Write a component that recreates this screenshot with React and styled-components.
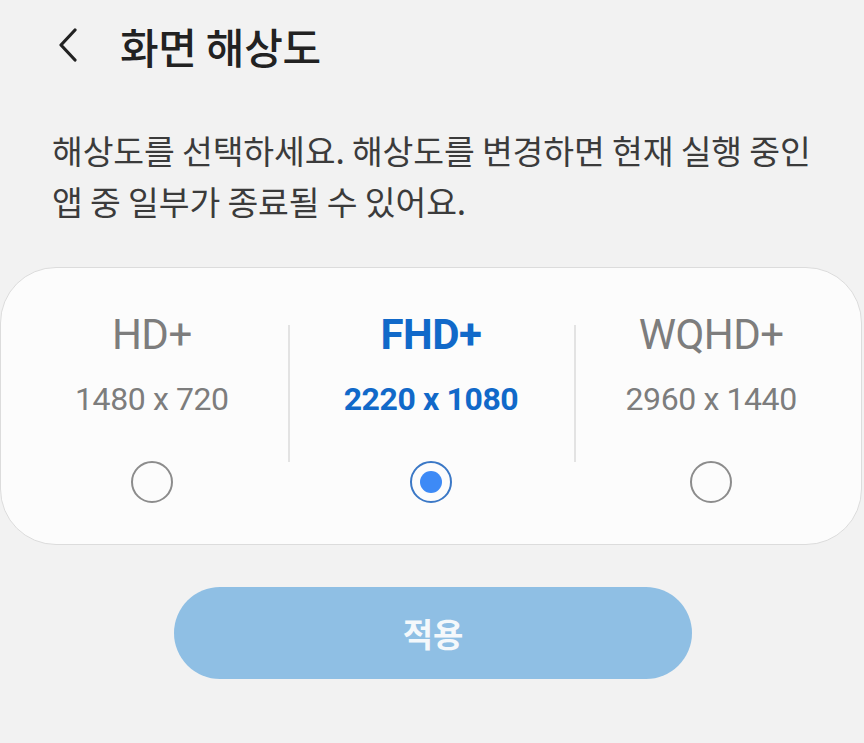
import React from "react";
import styled, { createGlobalStyle } from "styled-components";

const Global = createGlobalStyle`
  html, body { margin: 0; padding: 0; background: #f2f2f2; }
  body { font-family: Roboto, "Noto Sans CJK KR", sans-serif; }
`;

const Page = styled.div`
  width: 864px;
  height: 743px;
  background: #f2f2f2;
  display: flex;
  flex-direction: column;
  overflow: hidden;
`;

const Header = styled.header`
  display: flex;
  align-items: center;
  height: 90px;
  padding-left: 55px;
  gap: 40px;
`;

const BackButton = styled.button`
  border: none;
  background: none;
  padding: 0;
  width: 25px;
  height: 34px;
  display: flex;
  align-items: center;
  justify-content: center;
  color: #222;
`;

const Title = styled.h1`
  margin: 0;
  font-family: "Noto Sans CJK KR", sans-serif;
  font-weight: 500;
  font-size: 42px;
  color: #222;
  letter-spacing: -0.3px;
`;

const Description = styled.p`
  margin: 34px 0 0;
  padding: 0 20px 0 52px;
  font-family: "Noto Sans CJK KR", sans-serif;
  font-size: 33.5px;
  line-height: 51px;
  color: #3b3b3b;
  letter-spacing: -0.15px;
  white-space: nowrap;
`;

const Card = styled.div`
  margin: 41px 2px 0 0;
  height: 278px;
  background: #fcfcfc;
  border: 1px solid #dcdcdc;
  border-radius: 56px;
  display: grid;
  grid-template-columns: repeat(3, 1fr);
  box-sizing: border-box;
`;

const Option = styled.div`
  position: relative;
  display: flex;
  flex-direction: column;
  align-items: center;
  padding-top: 42px;
  padding-left: ${(p) => (p.$edge === "start" ? "15px" : "0")};
  padding-right: ${(p) => (p.$edge === "end" ? "13px" : "0")};
  &::before {
    content: "";
    display: ${(p) => (p.$divider ? "block" : "none")};
    position: absolute;
    left: 0;
    top: 57px;
    bottom: 82px;
    width: 2px;
    background: #e3e3e3;
  }
`;

const Label = styled.div`
  font-family: Roboto, sans-serif;
  font-size: 42px;
  line-height: 50px;
  font-weight: ${(p) => (p.$active ? 700 : 400)};
  color: ${(p) => (p.$active ? "#1169c9" : "#7d7d7d")};
  letter-spacing: -0.5px;
`;

const Resolution = styled.div`
  margin-top: 19px;
  font-family: Roboto, sans-serif;
  font-size: 32px;
  line-height: 40px;
  font-weight: ${(p) => (p.$active ? 700 : 400)};
  color: ${(p) => (p.$active ? "#1169c9" : "#7d7d7d")};
  letter-spacing: -0.4px;
`;

const Radio = styled.div`
  margin-top: 42px;
  width: 42px;
  height: 42px;
  box-sizing: border-box;
  border-radius: 50%;
  border: 2px solid ${(p) => (p.$active ? "#3b78c6" : "#8c8c8c")};
  display: flex;
  align-items: center;
  justify-content: center;
  &::after {
    content: "";
    display: ${(p) => (p.$active ? "block" : "none")};
    width: 22px;
    height: 22px;
    border-radius: 50%;
    background: #3d8af6;
  }
`;

const ApplyButton = styled.button`
  align-self: center;
  margin: 42px 0 0 2px;
  width: 518px;
  height: 92px;
  border: none;
  border-radius: 46px;
  background: #8fbfe4;
  color: #f4f8fb;
  font-family: "Noto Sans CJK KR", sans-serif;
  font-weight: 700;
  font-size: 33px;
`;

const options = [
  { name: "HD+", res: "1480 x 720", edge: "start" },
  { name: "FHD+", res: "2220 x 1080", active: true },
  { name: "WQHD+", res: "2960 x 1440", edge: "end" },
];

export default function App() {
  return (
    <Page>
      <Global />
      <Header>
        <BackButton aria-label="back">
          <svg width="22" height="34" viewBox="0 0 22 34" fill="none">
            <path d="M18 2 L4 17 L18 32" stroke="#222" strokeWidth="3.2" strokeLinecap="round" strokeLinejoin="round" />
          </svg>
        </BackButton>
        <Title>화면 해상도</Title>
      </Header>
      <Description>
        해상도를 선택하세요. 해상도를 변경하면 현재 실행 중인
        <br />앱 중 일부가 종료될 수 있어요.
      </Description>
      <Card>
        {options.map((o, i) => (
          <Option key={o.name} $divider={i > 0} $edge={o.edge}>
            <Label $active={o.active}>{o.name}</Label>
            <Resolution $active={o.active}>{o.res}</Resolution>
            <Radio $active={o.active} />
          </Option>
        ))}
      </Card>
      <ApplyButton>적용</ApplyButton>
    </Page>
  );
}
